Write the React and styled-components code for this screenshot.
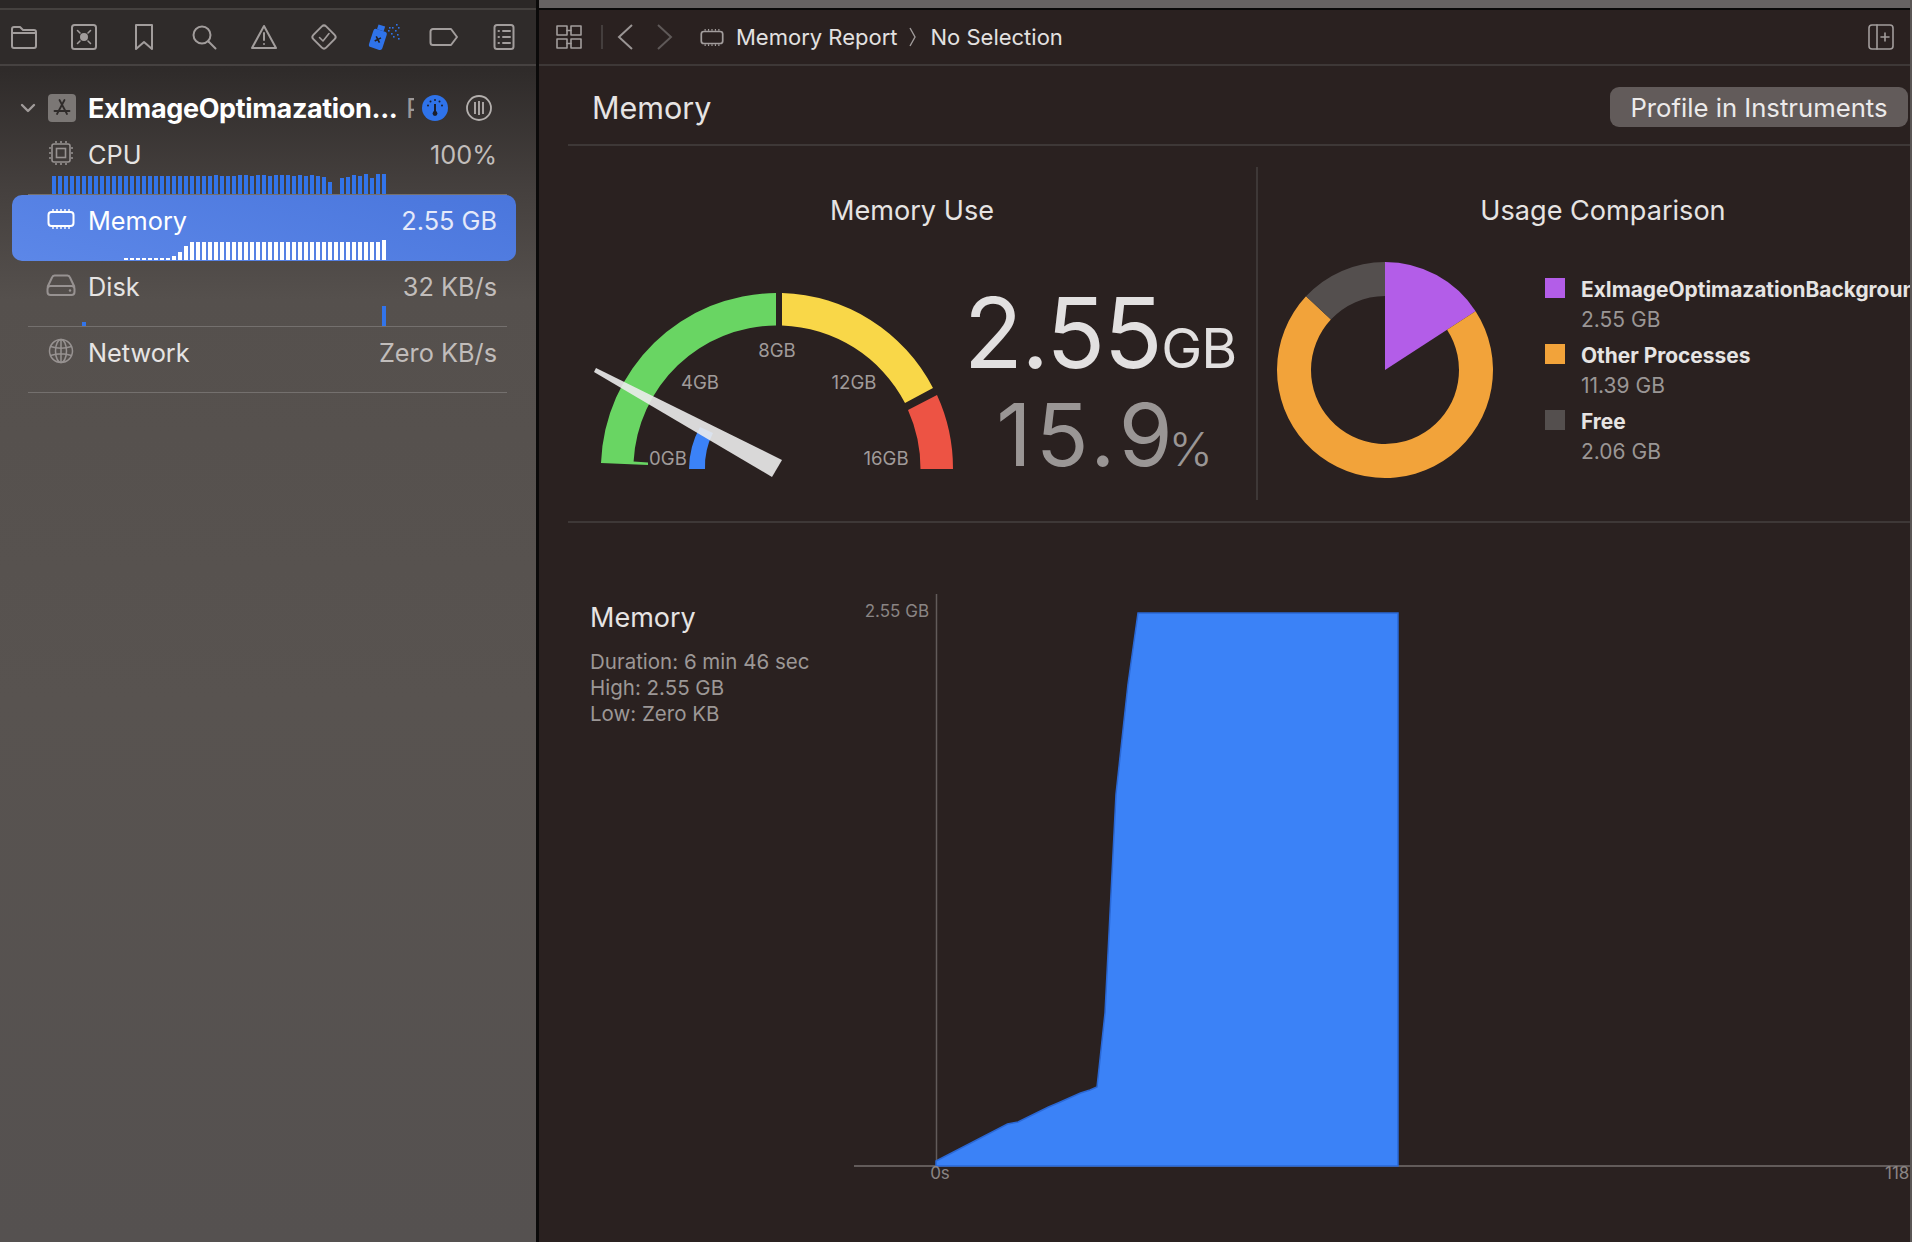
import React from 'react'
import styled, { createGlobalStyle } from 'styled-components'

const GlobalStyle = createGlobalStyle`
  html, body {
    margin: 0;
    padding: 0;
    height: 100%;
    overflow: hidden;
    background: #2a2120;
    font-family: Inter, "Liberation Sans", sans-serif;
  }
`

const Page = styled.div`
  display: flex;
  width: 1912px;
  height: 1242px;
  overflow: hidden;
`
const Sidebar = styled.aside`
  width: 536px;
  flex-shrink: 0;
  border-right: 3px solid #0b0a0a;
  background: linear-gradient(180deg, #2d2928 0, #2f2b2a 70px, #45403e 190px, #55504d 300px, #585350 700px, #555150 100%);
`
const SideTop = styled.div`
  height: 8px;
  background: #2b2726;
  border-bottom: 2px solid #45413f;
`
const NavBar = styled.div`
  display: flex;
  align-items: center;
  gap: 20px;
  height: 54px;
  padding-left: 4px;
  background: #2f2b2a;
  border-bottom: 2px solid #464241;
  box-sizing: content-box;
`
const NavCell = styled.div`
  display: flex;
  justify-content: center;
  align-items: center;
  width: 40px;
  height: 30px;
  color: #a29d9c;
  flex-shrink: 0;
`
const ProjectRow = styled.div`
  display: flex;
  align-items: center;
  height: 42px;
  padding: 21px 0 0 20px;
`
const Chevron = styled.svg`
  width: 16px;
  height: 10px;
  margin-right: 12px;
  flex-shrink: 0;
`
const AppTile = styled.div`
  display: flex;
  align-items: center;
  justify-content: center;
  width: 28px;
  height: 28px;
  border-radius: 4px;
  background: #7b7775;
  margin-right: 12px;
  flex-shrink: 0;
`
const ProjectName = styled.div`
  width: 308px;
  font-size: 27px;
  font-weight: 700;
  letter-spacing: -0.35px;
  color: #fff;
  white-space: nowrap;
  flex-shrink: 0;
`
const ClippedLabel = styled.div`
  width: 8px;
  margin-left: 10px;
  overflow: hidden;
  font-size: 27px;
  color: #9d9897;
  flex-shrink: 0;
`
const RoundIcon = styled.svg`
  width: 26px;
  height: 26px;
  margin-left: ${p => p.$gap}px;
  flex-shrink: 0;
`
const Row = styled.div`
  display: flex;
  flex-direction: column;
  justify-content: space-between;
  height: ${p => (p.$selected ? 66 : 65)}px;
  margin: 0 20px 0 12px;
  padding: 0 19px 0 33px;
  box-sizing: border-box;
  border-radius: 10px;
  background: ${p => (p.$selected ? 'linear-gradient(195deg, #4a76dc, #5c87e8)' : 'none')};
`
const RowHead = styled.div`
  display: flex;
  align-items: center;
  height: 40px;
  padding-top: 6px;
`
const RowIcon = styled.div`
  display: flex;
  justify-content: center;
  width: 32px;
  margin: -3px 11px 0 0;
  color: ${p => (p.$selected ? '#fff' : '#979291')};
`
const RowLabel = styled.div`
  flex: 1;
  font-size: 25.3px;
  color: ${p => (p.$selected ? '#fff' : '#e6e4e3')};
`
const RowValue = styled.div`
  font-size: 25.3px;
  color: ${p => (p.$selected ? '#e4e9fa' : '#c1bdbb')};
`
const Strip = styled.div`
  display: flex;
  align-items: flex-end;
  gap: 2px;
  height: 20px;
  margin-left: 7px;
  margin-bottom: ${p => (p.$selected ? 1 : 0)}px;
`
const Bar = styled.div`
  width: 4px;
  flex-shrink: 0;
  background: ${p => (p.$selected ? '#fff' : '#3274ea')};
`
const Separator = styled.div`
  height: 1px;
  margin: 0 29px 0 28px;
  background: #74706e;
`
const Main = styled.main`
  flex: 1;
  min-width: 0;
  box-sizing: border-box;
  border-right: 2px solid #5a5655;
  background: #2a2120;
  overflow: hidden;
`
const MainTop = styled.div`
  height: 8px;
  background: #676262;
  border-bottom: 2px solid #0a0808;
`
const Toolbar = styled.div`
  display: flex;
  align-items: center;
  height: 54px;
  padding: 0 16px;
  color: #a29d9c;
  border-bottom: 2px solid #3e3837;
`
const ToolDivider = styled.div`
  width: 2px;
  height: 24px;
  margin: 0 13px 0 18px;
  background: #443e3d;
`
const NavArrow = styled.svg`
  margin: ${p => p.$margin};
  flex-shrink: 0;
`
const CrumbIcon = styled.span`
  display: flex;
  margin-right: 12px;
`
const Crumb = styled.span`
  font-size: 22px;
  color: #e3e1e0;
  white-space: nowrap;
`
const ToolSpacer = styled.div`
  flex: 1;
`
const HeaderRow = styled.div`
  display: flex;
  align-items: center;
  justify-content: space-between;
  height: 74px;
  margin-left: 29px;
  padding: 4px 2px 0 24px;
  border-bottom: 2px solid #3e3837;
`
const PageTitle = styled.div`
  font-size: 30.5px;
  color: #e6e4e3;
`
const ProfileButton = styled.button`
  height: 40px;
  width: 298px;
  padding: 0;
  border: none;
  border-radius: 9px;
  background: #625b5a;
  color: #eceaea;
  font-family: inherit;
  font-size: 25.7px;
`
const Stats = styled.section`
  display: flex;
  height: 333px;
  margin-left: 29px;
  padding: 21px 0;
  border-bottom: 2px solid #3e3837;
`
const Panel = styled.div`
  flex-shrink: 0;
  width: ${p => p.$width}px;
  box-sizing: border-box;
  border-right: ${p => (p.$divided ? '2px solid #3e3837' : 'none')};
`
const PanelTitle = styled.div`
  margin-top: 28px;
  line-height: 32px;
  font-size: 27.1px;
  text-align: center;
  color: #e6e4e3;
`
const GaugeRow = styled.div`
  display: flex;
  margin-top: 53px;
  padding-left: 22px;
`
const Chart = styled.svg`
  display: block;
  flex-shrink: 0;
`
const Readout = styled.div`
  display: flex;
  flex-direction: column;
  align-items: center;
  width: 280px;
  padding-top: 2px;
`
const ReadoutLine = styled.div`
  line-height: 102px;
  height: 102px;
  margin-left: ${p => (p.$dim ? 9 : 0)}px;
  white-space: nowrap;
  font-weight: 400;
  color: ${p => (p.$dim ? '#9a9695' : '#e2e0e0')};
  font-size: ${p => (p.$dim ? 87 : 97)}px;
  letter-spacing: ${p => (p.$dim ? 4 : -1.5)}px;
`
const Unit = styled.span`
  font-size: ${p => (p.$dim ? 47 : 55)}px;
  font-weight: ${p => (p.$dim ? 300 : 400)};
  letter-spacing: ${p => (p.$dim ? 0 : -1)}px;
  margin-left: ${p => (p.$dim ? -8 : 0)}px;
`
const DonutRow = styled.div`
  display: flex;
  margin-top: 28px;
  padding-left: 12px;
`
const Legend = styled.div`
  margin: 20px 0 0 45px;
`
const LegendItem = styled.div`
  display: grid;
  grid-template-columns: 20px auto;
  grid-template-rows: 30px 29px;
  align-content: start;
  column-gap: 16px;
  height: 66px;
`
const Swatch = styled.div`
  width: 20px;
  height: 20px;
  margin-top: 3px;
  background: ${p => p.$color};
`
const LegendName = styled.div`
  line-height: 30px;
  font-size: 20.9px;
  font-weight: 700;
  color: #e6e4e3;
  white-space: nowrap;
`
const LegendValue = styled.div`
  grid-column: 2;
  line-height: 29px;
  font-size: 21px;
  color: #9a9695;
`
const ChartSection = styled.section`
  display: flex;
  margin-left: 29px;
`
const ChartInfo = styled.div`
  width: 286px;
  flex-shrink: 0;
  box-sizing: border-box;
  padding: 79px 0 0 22px;
`
const InfoTitle = styled.div`
  line-height: 32px;
  margin-bottom: 15px;
  font-size: 27px;
  color: #e6e4e3;
`
const InfoLine = styled.div`
  line-height: 26px;
  font-size: 20.5px;
  color: #9c9796;
`
const ChartArea = styled.div`
  margin-top: 58px;
`

const Ic = ({ w = 28, h = 28, vb, children, sw = 2 }) => (
  <svg width={w} height={h} viewBox={vb || `0 0 ${w} ${h}`} fill="none" stroke="currentColor" strokeWidth={sw} strokeLinejoin="round" strokeLinecap="round">
    {children}
  </svg>
)

const navIcons = [
  <Ic key="folder" w={28} h={24}>
    <path d="M2 6 V4 a2 2 0 0 1 2-2 h6 l3 3 h11 a2 2 0 0 1 2 2 v14 a2 2 0 0 1-2 2 H4 a2 2 0 0 1-2-2 Z" />
    <path d="M2 8 H26" />
  </Ic>,
  <Ic key="source" w={28} h={28}>
    <rect x="2" y="2" width="24" height="24" rx="2.5" />
    <circle cx="14" cy="14" r="4" fill="currentColor" stroke="none" />
    <path d="M7.5 7.5 l2.5 2.5 M20.5 7.5 l-2.5 2.5 M7.5 20.5 l2.5-2.5 M20.5 20.5 l-2.5-2.5" strokeWidth="1.6" />
  </Ic>,
  <Ic key="bookmark" w={20} h={28}>
    <path d="M2 2 H18 V26 L10 19 L2 26 Z" />
  </Ic>,
  <Ic key="search" w={26} h={26}>
    <circle cx="11" cy="11" r="8.5" />
    <path d="M17.5 17.5 L24.5 24.5" />
  </Ic>,
  <Ic key="warn" w={26} h={26}>
    <path d="M13 2 L25 24 H1 Z" />
    <path d="M13 9 V16" />
    <circle cx="13" cy="20" r="1" fill="currentColor" stroke="none" />
  </Ic>,
  <Ic key="test" w={28} h={28}>
    <rect x="5" y="5" width="18" height="18" rx="3" transform="rotate(45 14 14)" />
    <path d="M9.5 14.5 L13 18 L19 10.5" strokeWidth="1.6" />
  </Ic>,
  <svg key="spray" width="32" height="28" viewBox="0 0 32 28">
    <g transform="rotate(18 10 16)">
      <rect x="6" y="2" width="7" height="5" fill="#2f73ea" />
      <rect x="3" y="7" width="14" height="19" rx="2.5" fill="#2f73ea" />
      <path d="M7.5 14 l5 5 M12.5 14 l-5 5" stroke="#232020" strokeWidth="1.6" />
    </g>
    {[[20, 7], [24, 4], [28, 1], [23, 10], [27, 7], [30, 4], [25, 13], [29, 11], [30, 15], [21, 4]].map(([x, y]) => (
      <rect key={x + '-' + y} x={x} y={y} width="1.6" height="1.6" fill="#2f73ea" />
    ))}
  </svg>,
  <Ic key="tag" w={30} h={20}>
    <path d="M4 2 H22 L28 10 L22 18 H4 a2.5 2.5 0 0 1-2.5-2.5 V4.5 A2.5 2.5 0 0 1 4 2 Z" />
  </Ic>,
  <Ic key="report" w={22} h={28}>
    <rect x="1.5" y="2" width="19" height="24" rx="2.5" />
    <path d="M10 8 H17 M10 14 H17 M10 20 H17" />
    <path d="M5.5 8 H6 M5.5 14 H6 M5.5 20 H6" />
  </Ic>,
]

const MemoryIcon = ({ w = 28, h = 22 }) => (
  <svg width={w} height={h} viewBox="0 0 28 22" fill="none" stroke="currentColor" strokeWidth="2">
    <rect x="1.5" y="4" width="25" height="14" rx="3" />
    <path d="M6 1 V3 M10 1 V3 M14 1 V3 M18 1 V3 M22 1 V3 M6 19 V21 M10 19 V21 M14 19 V21 M18 19 V21 M22 19 V21" strokeWidth="1.4" />
  </svg>
)
const CpuIcon = () => (
  <svg width="24" height="24" viewBox="0 0 24 24" fill="none" stroke="currentColor" strokeWidth="1.6">
    <rect x="3" y="3" width="18" height="18" rx="2" />
    <rect x="7.5" y="7.5" width="9" height="9" />
    <path d="M7 0 V2 M12 0 V2 M17 0 V2 M7 22 V24 M12 22 V24 M17 22 V24 M0 7 H2 M0 12 H2 M0 17 H2 M22 7 H24 M22 12 H24 M22 17 H24" />
  </svg>
)
const DiskIcon = () => (
  <svg width="30" height="22" viewBox="0 0 30 22" fill="none" stroke="currentColor" strokeWidth="2">
    <path d="M1.5 13 L6 3.5 A3 3 0 0 1 8.5 1.5 H21.5 A3 3 0 0 1 24 3.5 L28.5 13" />
    <rect x="1.5" y="12" width="27" height="9" rx="3" />
    <circle cx="24" cy="16.5" r="1.2" fill="currentColor" stroke="none" />
  </svg>
)
const GlobeIcon = () => (
  <svg width="26" height="26" viewBox="0 0 26 26" fill="none" stroke="currentColor" strokeWidth="1.5">
    <circle cx="13" cy="13" r="11.5" />
    <ellipse cx="13" cy="13" rx="5.5" ry="11.5" />
    <path d="M13 1.5 V24.5 M2.5 8.5 Q13 12 23.5 8.5 M2.5 17.5 Q13 14 23.5 17.5" />
  </svg>
)

// bar heights, one per slot of 6px
const cpuBars = [
  ...Array(27).fill(18), 19, 18, 18, 18, 19, 19, 18, 19, 19, 18, 19, 19, 19, 18, 19, 18, 19, 18, 17,
  12, 0, 16, 17, 19, 18, 20, 16, 20, 20,
].slice(0, 56)
const memBars = [
  ...Array(12).fill(0), ...Array(8).fill(2), 4, 8, 14,
  ...Array(32).fill(18), 20,
]
const diskBars = Array.from({ length: 56 }, (_, i) => (i === 5 ? 4 : i === 55 ? 20 : 0))

const rows = [
  { label: 'CPU', value: '100%', icon: <CpuIcon />, bars: cpuBars },
  { label: 'Memory', value: '2.55 GB', icon: <MemoryIcon />, bars: memBars, selected: true },
  { label: 'Disk', value: '32 KB/s', icon: <DiskIcon />, bars: diskBars },
  { label: 'Network', value: 'Zero KB/s', icon: <GlobeIcon />, bars: [] },
]

const polar = (cx, cy, r, deg) => {
  const a = (deg * Math.PI) / 180
  return [cx + r * Math.sin(a), cy - r * Math.cos(a)]
}
const ring = (cx, cy, R, r, from, to) => {
  const large = to - from > 180 ? 1 : 0
  const [x1, y1] = polar(cx, cy, R, from)
  const [x2, y2] = polar(cx, cy, R, to)
  const [x3, y3] = polar(cx, cy, r, to)
  const [x4, y4] = polar(cx, cy, r, from)
  return `M${x1} ${y1} A${R} ${R} 0 ${large} 1 ${x2} ${y2} L${x3} ${y3} A${r} ${r} 0 ${large} 0 ${x4} ${y4} Z`
}

const gaugeLabels = [
  ['8GB', 777, 350],
  ['4GB', 700, 382],
  ['12GB', 854, 382],
  ['0GB', 668, 458],
  ['16GB', 886, 458],
]

const Gauge = () => (
  <Chart width="370" height="210" viewBox="590 280 370 210">
    <path d="M601 463 A176 176 0 0 1 776 293 L776 325.5 A143.5 143.5 0 0 0 633.6 461.5 L648 462.5 L648 465 Z" fill="#69d563" />
    <path d="M782 293 A176 176 0 0 1 933 388 L905 403 A144 144 0 0 0 782 325.5 Z" fill="#f9d748" />
    <path d="M937 395 A176 176 0 0 1 953 469 L920.5 469 A143.5 143.5 0 0 0 908 410 Z" fill="#ed5344" />
    <path d="M689 469 A88 88 0 0 1 700 427 L713 433 A73 73 0 0 0 705 469 Z" fill="#3b82f7" />
    {gaugeLabels.map(([t, x, y]) => (
      <text key={t} x={x} y={y} fill="#a09b9a" fontSize="18.6" textAnchor="middle" dominantBaseline="central" fontFamily="Inter, sans-serif">{t}</text>
    ))}
    <path d="M596 368 L782 460 L772 477 L594 372 Z" fill="#ececec" fillOpacity="0.9" />
  </Chart>
)

const Donut = () => (
  <Chart width="230" height="230" viewBox="1270 255 230 230">
    <path d={`M1385 370 L1385 262 A108 108 0 0 1 ${polar(1385, 370, 108, 57).join(' ')} Z`} fill="#b35de8" />
    <path d={ring(1385, 370, 108, 74, 57, 313)} fill="#f2a33a" />
    <path d={ring(1385, 370, 108, 74, 313, 360)} fill="#544f4e" />
  </Chart>
)

const legend = [
  { name: 'ExImageOptimazationBackground', value: '2.55 GB', color: '#b35de8' },
  { name: 'Other Processes', value: '11.39 GB', color: '#f2a33a' },
  { name: 'Free', value: '2.06 GB', color: '#544f4e' },
]

const area = 'M936 1165 L936 1160 L1007.5 1123 L1018 1121 L1048.5 1106 L1058 1102 L1080.5 1092 L1090 1089 L1097 1086 L1105 1012 L1116 793 L1128 683 L1138 612 L1398 612 L1398 1165 Z'

const MemoryChart = () => (
  <Chart width="1056" height="620" viewBox="854 580 1056 620">
    <line x1="936.5" y1="593" x2="936.5" y2="1165" stroke="#625b5a" strokeWidth="1.5" />
    <line x1="854" y1="1165" x2="1912" y2="1165" stroke="#625b5a" strokeWidth="2" />
    <path d={area} fill="#3b82f7" stroke="#2a68d6" strokeWidth="1.5" />
    <text x="929" y="610" fill="#8a8584" fontSize="17" textAnchor="end" dominantBaseline="central" fontFamily="Inter, sans-serif">2.55 GB</text>
    <text x="940" y="1172" fill="#8a8584" fontSize="17" textAnchor="middle" dominantBaseline="central" fontFamily="Inter, sans-serif">0s</text>
    <text x="1885" y="1172" fill="#8a8584" fontSize="17" dominantBaseline="central" fontFamily="Inter, sans-serif">118</text>
  </Chart>
)

export default function App() {
  return (
    <Page>
      <GlobalStyle />
      <Sidebar>
        <SideTop />
        <NavBar>
          {navIcons.map((icon, i) => <NavCell key={i}>{icon}</NavCell>)}
        </NavBar>
        <ProjectRow>
          <Chevron viewBox="0 0 16 10" fill="none" stroke="#a09b9a" strokeWidth="2.4" strokeLinecap="round" strokeLinejoin="round">
            <path d="M2 2 L8 8 L14 2" />
          </Chevron>
          <AppTile>
            <svg width="20" height="20" viewBox="0 0 20 20" fill="none" stroke="#2f2b2a" strokeWidth="1.8" strokeLinecap="round">
              <path d="M12.5 2 L5 16 M7.5 2 L15 16 M2.5 13 H17.5" />
            </svg>
          </AppTile>
          <ProjectName>ExImageOptimazation...</ProjectName>
          <ClippedLabel>P</ClippedLabel>
          <RoundIcon $gap={8} viewBox="0 0 26 26">
            <circle cx="13" cy="13" r="13" fill="#2f73ea" />
            <path d="M13 9 V17" stroke="#1b1f2e" strokeWidth="2" />
            <circle cx="13" cy="18.5" r="2.4" fill="#1b1f2e" />
            {[[13, 5], [8.5, 6.5], [17.5, 6.5], [6, 10.5], [20, 10.5]].map(([x, y]) => (
              <circle key={x + '-' + y} cx={x} cy={y} r="1" fill="#1b1f2e" />
            ))}
          </RoundIcon>
          <RoundIcon $gap={18} viewBox="0 0 26 26" fill="none" stroke="#b4b0ae" strokeWidth="1.8">
            <circle cx="13" cy="13" r="12" />
            <path d="M9 7 V19 M13 6 V20 M17 7 V19" />
          </RoundIcon>
        </ProjectRow>
        {rows.map(r => (
          <React.Fragment key={r.label}>
            <Row $selected={r.selected}>
              <RowHead>
                <RowIcon $selected={r.selected}>{r.icon}</RowIcon>
                <RowLabel $selected={r.selected}>{r.label}</RowLabel>
                <RowValue $selected={r.selected}>{r.value}</RowValue>
              </RowHead>
              <Strip $selected={r.selected}>
                {r.bars.map((h, i) => <Bar key={i} $selected={r.selected} style={{ height: h }} />)}
              </Strip>
            </Row>
            {!r.selected && <Separator />}
          </React.Fragment>
        ))}
      </Sidebar>
      <Main>
        <MainTop />
        <Toolbar>
          <Ic w={28} h={26} sw={1.6}>
            <path d="M2 2 H12 V11 H2 Z M16 2 H26 V11 H16 Z M2 15 H12 V24 H2 Z M16 15 H26 V24 H16 Z" />
            <path d="M12 6.5 H16 M12 19.5 H16" />
          </Ic>
          <ToolDivider />
          <NavArrow width="18" height="28" viewBox="0 0 18 28" fill="none" stroke="#9a9594" strokeWidth="2"><path d="M16 2 L3 14 L16 26" /></NavArrow>
          <NavArrow $margin="0 26px 0 22px" width="18" height="28" viewBox="0 0 18 28" fill="none" stroke="#5f5958" strokeWidth="2"><path d="M2 2 L15 14 L2 26" /></NavArrow>
          <CrumbIcon><MemoryIcon w={24} h={19} /></CrumbIcon>
          <Crumb>Memory Report</Crumb>
          <NavArrow $margin="0 15px 0 11px" width="7" height="20" viewBox="0 0 7 20" fill="none" stroke="#a09b9a" strokeWidth="1.4"><path d="M1 1 L6 10 L1 19" /></NavArrow>
          <Crumb>No Selection</Crumb>
          <ToolSpacer />
          <Ic w={26} h={26} sw={1.6}>
            <rect x="1" y="1" width="24" height="24" rx="3" />
            <path d="M9 1 V25 M13 13 H21 M17 9 V17" />
          </Ic>
        </Toolbar>
        <HeaderRow>
          <PageTitle>Memory</PageTitle>
          <ProfileButton>Profile in Instruments</ProfileButton>
        </HeaderRow>
        <Stats>
          <Panel $width={690} $divided>
            <PanelTitle>Memory Use</PanelTitle>
            <GaugeRow>
              <Gauge />
              <Readout>
                <ReadoutLine>2.55<Unit>GB</Unit></ReadoutLine>
                <ReadoutLine $dim>15.9<Unit $dim>%</Unit></ReadoutLine>
              </Readout>
            </GaugeRow>
          </Panel>
          <Panel $width={690}>
            <PanelTitle>Usage Comparison</PanelTitle>
            <DonutRow>
              <Donut />
              <Legend>
                {legend.map(l => (
                  <LegendItem key={l.name}>
                    <Swatch $color={l.color} />
                    <LegendName>{l.name}</LegendName>
                    <LegendValue>{l.value}</LegendValue>
                  </LegendItem>
                ))}
              </Legend>
            </DonutRow>
          </Panel>
        </Stats>
        <ChartSection>
          <ChartInfo>
            <InfoTitle>Memory</InfoTitle>
            <InfoLine>Duration: 6 min 46 sec</InfoLine>
            <InfoLine>High: 2.55 GB</InfoLine>
            <InfoLine>Low: Zero KB</InfoLine>
          </ChartInfo>
          <ChartArea>
            <MemoryChart />
          </ChartArea>
        </ChartSection>
      </Main>
    </Page>
  )
}
